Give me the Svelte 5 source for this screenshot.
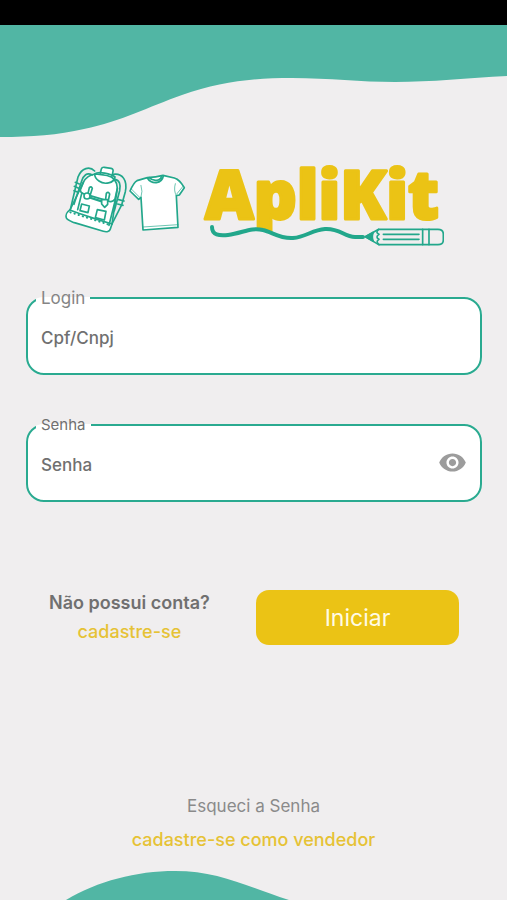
<script>
  let login = '';
  let senha = '';
  let showPassword = false;

  function togglePassword() {
    showPassword = !showPassword;
  }
</script>

<div class="page">
  <div class="status-bar"></div>

  <svg class="wave-top" viewBox="0 0 507 113" preserveAspectRatio="none" aria-hidden="true">
    <path d="M0 0H507V51C468 53 431 57 395 57C360 57 330 53 292 53C252 53 220 57 182 70C148 82 122 96 84 104C58 110 32 112 0 112Z" />
  </svg>

  <main>
    <svg class="logo" viewBox="-1 -16 380 106" role="img" aria-label="ApliKit">
      <!-- Backpack -->
      <g class="outline" transform="translate(-10 -5) scale(0.3333)">
        <path class="fill" d="M45 165C36 170 31 180 34 189C38 197 48 199 58 203L145 229C155 232 164 230 166 222L171 207L187 100C186 75 171 64 156 61L122 57C106 58 91 69 85 82Z" />
        <path d="M119 48C104 33 80 38 69 66L46 164M112 60C95 51 86 61 80 78L57 148" />
        <path d="M175 58C203 54 218 77 211 110L200 150L171 207M180 73C193 75 198 88 194 107L178 167" />
        <path class="fill" d="M136 55L139 42Q141 36 148 37L168 40Q176 42 174 49L171 63" />
        <path d="M119 57C130 48 168 56 180 66C177 85 148 90 132 78C124 73 119 67 119 57Z" />
        <path d="M85 82L76 105Q76 113 85 116L163 139Q175 142 180 132L187 100" />
        <path class="thick" d="M108 129L140 139" />
        <path class="fill" d="M99 116L103 98Q109 92 112 100L106 119M152 132L154 115Q160 108 164 117L160 137" />
        <circle class="fill" cx="96" cy="123" r="9" />
        <path class="fill" d="M140 134H158V148L149 157L140 147Z" />
        <path d="M80 116L68 164M181 135L162 211" />
        <path class="fill" d="M80 147L103 153L99 173L75 167ZM127 164L153 169L148 195L121 188Z" />
        <path d="M61 82L73 87M58 94L71 100M57 107L69 112M191 134L207 138M188 147L204 151" />
        <path d="M44 165L71 175L119 191L171 207" />
        <path class="stitch" d="M46 172L165 210" />
      </g>

      <!-- T-shirt -->
      <g class="outline" transform="translate(-10 -5) scale(0.3333)">
        <path class="fill" d="M277 68L246 77Q237 81 225 108L251 133L258 127L264 225L369 217L364 122L373 120L388 98C379 84 373 73 358 69L324 61Q303 66 277 68Z" />
        <path d="M277 69Q286 84 304 83Q322 80 325 63M283 68Q291 77 304 76Q317 75 319 65" />
        <path class="thin" d="M258 127Q264 109 258 91M364 122Q355 107 361 86M264 216L369 209M229 102L254 127M366 116L384 94" />
      </g>

      <text class="brand" x="140" y="59">ApliKit</text>

      <!-- The line runs over the tail of the "p" and hides what is below it -->
      <path class="under-line" d="M163 75C178 73 186 67 198 70C207 72 215 79 228 78V90H163Z" />
      <path class="string" d="M147 67C147 75 154 76 163 75C178 73 186 67 198 70C207 72 215 79 228 78C241 77 247 70 260 69C275 68 279 77 290 77H298" />

      <!-- Pencil -->
      <g class="outline" transform="translate(255 -5) scale(0.3333)">
        <path d="M136 245L176 223H354Q370 223 370 237V255Q370 269 354 269H176Z" />
        <path class="tip" d="M136 245L160 232Q154 245 160 259Z" />
        <path d="M176 223Q165 232 177 238Q165 246 177 253Q166 260 177 269M190 238H297M190 253H297M308 223V269M327 223V269" />
      </g>
    </svg>

    <form on:submit|preventDefault>
      <fieldset class="field">
        <legend><label for="login">Login</label></legend>
        <input type="text" id="login" placeholder="Cpf/Cnpj" bind:value={login}>
      </fieldset>

      <fieldset class="field">
        <legend class="small"><label for="senha">Senha</label></legend>
        <input
          type={showPassword ? 'text' : 'password'}
          id="senha"
          placeholder="Senha"
          value={senha}
          on:input={(e) => (senha = e.currentTarget.value)}
        >
        <button type="button" class="eye" aria-label="Mostrar senha" on:click={togglePassword}>
          <svg viewBox="0 0 24 24" aria-hidden="true">
            <path d="M12 4.5C7 4.5 2.73 7.61 1 12c1.73 4.39 6 7.5 11 7.5s9.27-3.11 11-7.5c-1.73-4.39-6-7.5-11-7.5zM12 17c-2.76 0-5-2.24-5-5s2.24-5 5-5 5 2.24 5 5-2.24 5-5 5zm0-8c-1.66 0-3 1.34-3 3s1.34 3 3 3 3-1.34 3-3-1.34-3-3-3z" />
          </svg>
        </button>
      </fieldset>

      <div class="actions">
        <div class="signup">
          <span>Não possui conta?</span>
          <a href="#cadastro">cadastre-se</a>
        </div>
        <button type="submit" class="submit">Iniciar</button>
      </div>
    </form>
  </main>

  <footer>
    <a class="forgot" href="#senha">Esqueci a Senha</a>
    <a href="#vendedor">cadastre-se como vendedor</a>
  </footer>

  <svg class="wave-bottom" viewBox="0 0 507 30" preserveAspectRatio="none" aria-hidden="true">
    <path d="M66 30C98 11 136 1 175 1C218 1 246 16 289 30Z" />
  </svg>
</div>

<style>
  :global(body) {
    background: #f0eeef;
  }

  .page {
    display: flex;
    flex-direction: column;
    min-height: 100vh;
    background: #f0eeef;
    color: #707070;
    font-family: Inter, Roboto, sans-serif;
    font-size: 17px;
    line-height: 24px;
  }

  .status-bar {
    height: 25px;
    background: #000;
  }

  .wave-top,
  .wave-bottom {
    display: block;
    width: 100%;
    fill: #51b6a4;
  }

  .wave-top {
    height: 113px;
  }

  .wave-bottom {
    height: 30px;
  }

  main {
    padding: 6px 25px 0 26px;
  }

  .logo {
    display: block;
    width: 380px;
    max-width: 100%;
    margin: 0 auto;
  }

  .outline {
    fill: none;
    stroke: #22a78b;
    stroke-width: 5;
    stroke-linecap: round;
    stroke-linejoin: round;
  }

  .fill {
    fill: #fff;
  }

  .thick {
    stroke-width: 7;
  }

  .thin {
    stroke-width: 2;
  }

  .stitch {
    stroke-width: 6;
    stroke-dasharray: 1 12;
  }

  .tip {
    fill: #22a78b;
  }

  .brand {
    fill: #ebc315;
    stroke: #ebc315;
    stroke-width: 3;
    stroke-linejoin: round;
    font-family: "Open Sans", "Noto Sans", sans-serif;
    font-size: 67px;
    font-weight: 800;
  }

  .under-line {
    fill: #f0eeef;
  }

  .string {
    fill: none;
    stroke: #22a78b;
    stroke-width: 4;
    stroke-linecap: round;
  }

  form {
    display: flex;
    flex-direction: column;
    gap: 40px;
    margin-top: 38px;
  }

  .field {
    position: relative;
    min-width: 0;
    margin: 0;
    padding: 0 8px;
    border: 2px solid #2aaa90;
    border-radius: 18px;
    background: #fff;
  }

  legend {
    padding: 0 5px;
    font-size: 17px;
    line-height: 20px;
    color: #858585;
  }

  legend.small {
    font-size: 15px;
    color: #707070;
  }

  .field input {
    display: block;
    box-sizing: border-box;
    width: 100%;
    height: 65px;
    padding: 0 48px 6px 5px;
    border: none;
    outline: none;
    background: transparent;
    color: #707070;
    font: inherit;
    font-weight: 500;
  }

  .field input::placeholder {
    color: #707070;
    opacity: 1;
  }

  .eye {
    position: absolute;
    top: 13px;
    right: 13px;
    width: 29px;
    height: 29px;
    padding: 0;
    border: none;
    background: none;
    cursor: pointer;
  }

  .eye svg {
    display: block;
    width: 100%;
    fill: #9c9c9c;
  }

  .actions {
    display: flex;
    align-items: center;
    justify-content: space-between;
    gap: 24px;
    margin-top: 48px;
    padding: 0 23px;
  }

  .signup {
    display: flex;
    flex-direction: column;
    align-items: center;
    gap: 5px;
    font-size: 18px;
    font-weight: 600;
  }

  a {
    color: #e6c235;
    font-size: 18px;
    font-weight: 500;
    text-decoration: none;
  }

  .submit {
    width: 203px;
    height: 55px;
    border: none;
    border-radius: 13px;
    background: #ebc315;
    color: #fffbe6;
    font: inherit;
    font-size: 23px;
    cursor: pointer;
  }

  footer {
    display: flex;
    flex-direction: column;
    align-items: center;
    gap: 10px;
    margin-top: auto;
    padding: 24px 0 18px;
  }

  .forgot {
    color: #8a8a8a;
    font-size: 17px;
    font-weight: 400;
  }
</style>
